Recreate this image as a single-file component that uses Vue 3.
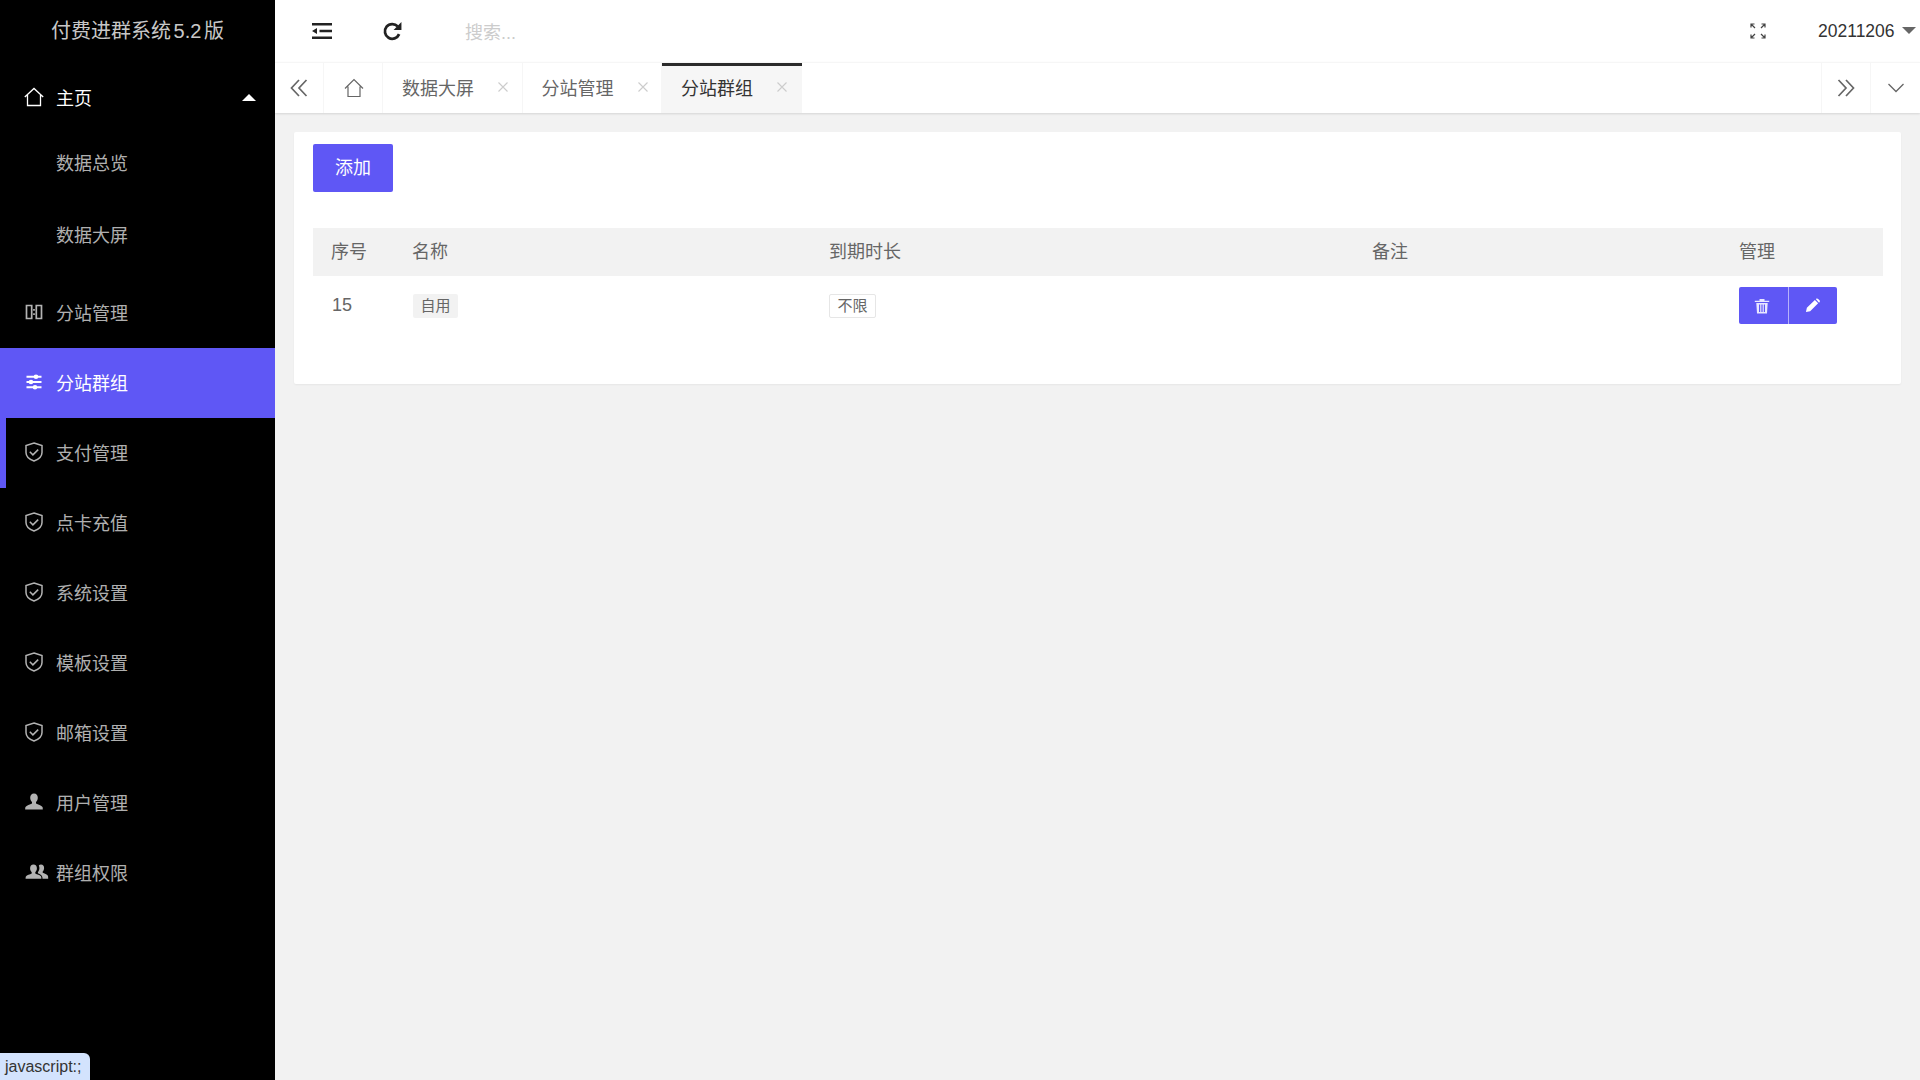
<script setup>
const subItems = ['数据总览', '数据大屏']
const menu = [
  { label: '分站管理', icon: 'book' },
  { label: '分站群组', icon: 'sliders', active: true },
  { label: '支付管理', icon: 'shield', marked: true },
  { label: '点卡充值', icon: 'shield' },
  { label: '系统设置', icon: 'shield' },
  { label: '模板设置', icon: 'shield' },
  { label: '邮箱设置', icon: 'shield' },
  { label: '用户管理', icon: 'user' },
  { label: '群组权限', icon: 'users' }
]
const tabs = [
  { label: '数据大屏' },
  { label: '分站管理' },
  { label: '分站群组', active: true }
]
</script>

<template>
  <div class="app">
    <aside class="sidebar">
      <div class="logo">付费进群系统<span class="ver">5.2</span>版</div>
      <a class="item home">
        <svg class="ico" viewBox="0 0 20 20" fill="none" stroke="currentColor" stroke-width="1.300"><path d="M.8 10 10 1.500l9.200 8.500M3.500 8v10.500h13V8"/></svg>
        <span>主页</span>
        <i class="up"></i>
      </a>
      <div class="sub">
        <a v-for="s in subItems" :key="s" class="subitem">{{ s }}</a>
      </div>
      <a v-for="m in menu" :key="m.label" class="item" :class="{ active: m.active, marked: m.marked }">
        <svg v-if="m.icon === 'book'" class="ico" viewBox="0 0 20 20" fill="none" stroke="currentColor" stroke-width="1.700"><path d="M2.500 3.500h5.200v13H2.500zM12.300 3.500h5.200v13h-5.200zM10 7v1.800M10 11.200V13"/></svg>
        <svg v-else-if="m.icon === 'sliders'" class="ico" viewBox="0 0 20 20" fill="currentColor"><path d="M2.500 3.800h15v1.900h-15zM2.500 9.050h15v1.900h-15zM2.500 14.300h15v1.900h-15z"/><circle cx="12" cy="4.750" r="2.300"/><circle cx="7" cy="10" r="2.300"/><circle cx="11" cy="15.250" r="2.300"/></svg>
        <svg v-else-if="m.icon === 'shield'" class="ico shield" viewBox="0 0 20 20" fill="none" stroke="currentColor" stroke-width="1.500"><path d="M10 1 18 3.600v6.900c0 4-3.600 7-8 8.500-4.400-1.500-8-4.500-8-8.500V3.600z"/><path d="m5.800 9.800 3.100 3.100 5.300-5.300"/></svg>
        <svg v-else-if="m.icon === 'user'" class="ico" viewBox="0 0 20 20" fill="currentColor"><path d="M10 1.500c2.400 0 3.800 1.800 3.800 4.200 0 1.800-.8 3.500-1.800 4.300v1.500c1.800 1 5.600 1.800 6.500 3.500.3.700.3 2 .3 2.500H1.200c0-.5 0-1.800.3-2.500.9-1.700 4.700-2.500 6.500-3.500V10C7 9.200 6.200 7.500 6.200 5.700 6.200 3.300 7.600 1.500 10 1.500z"/></svg>
        <svg v-else class="ico wide" viewBox="0 0 24 20" fill="currentColor"><path d="M8.500 2.500c2.200 0 3.400 1.600 3.400 3.700 0 1.600-.7 3.100-1.600 3.900v1.400c1.600.9 5 1.600 5.800 3.100.3.600.3 1.800.3 2.200H.6c0-.4 0-1.600.3-2.200.8-1.500 4.200-2.200 5.800-3.100v-1.400C5.800 9.300 5.100 7.800 5.100 6.200c0-2.100 1.200-3.700 3.400-3.700z"/><path d="M16 2.500c2 0 3.100 1.500 3.100 3.400 0 1.500-.6 2.900-1.400 3.600v1.300c1.400.8 4.500 1.500 5.200 2.900.3.600.3 3.100.3 3.100h-5.700c0-2.300-.6-3.600-2.200-4.400-.8-.4-1.700-.8-2.400-1.200v-1c.9-1 1.500-2.500 1.500-4.200 0-1-.2-1.800-.6-2.500.5-.6 1.300-1 2.200-1z"/></svg>
        <span>{{ m.label }}</span>
      </a>
    </aside>

    <main class="main">
      <header class="topbar">
        <svg class="hamb" viewBox="0 0 20 16" fill="#222"><path d="M0 0h20v2.400H0zM7.500 6.800H20v2.400H7.500zM0 13.600h20V16H0zM0 8l5-3v6z"/></svg>
        <svg class="refresh" viewBox="0 0 20 20" fill="none"><path d="M16.300 12.500A7 7 0 1 1 15 5.200" stroke="#222" stroke-width="2.600"/><path d="M18.500 1v7.500H11z" fill="#222"/></svg>
        <div class="search">搜索...</div>
        <svg class="full" viewBox="0 0 16 16" fill="none" stroke="#444" stroke-width="1.200"><path d="M1 4.500V1h3.500M1 1l4 4M15 4.500V1h-3.500M15 1l-4 4M1 11.500V15h3.500M1 15l4-4M15 11.500V15h-3.500M15 15l-4-4"/></svg>
        <div class="account">20211206<i class="caret"></i></div>
      </header>

      <nav class="tabbar">
        <div class="tabbtn left">
          <svg viewBox="0 0 18 18" fill="none" stroke="#666" stroke-width="1.700"><path d="M9 1 1.500 9 9 17M16.500 1 9 9l7.500 8"/></svg>
        </div>
        <div class="tabbtn homebtn">
          <svg viewBox="0 0 20 20" fill="none" stroke="#666" stroke-width="1.200"><path d="M1 10.500 10 1.500l9 9M4 8.500V18.500h12V8.500"/></svg>
        </div>
        <div v-for="t in tabs" :key="t.label" class="tab" :class="{ active: t.active }">
          <span>{{ t.label }}</span>
          <svg class="close" viewBox="0 0 10 10" stroke="#ccc" stroke-width="1.100"><path d="m.5.500 9 9M9.500.500l-9 9"/></svg>
        </div>
        <div class="spacer"></div>
        <div class="tabbtn right">
          <svg viewBox="0 0 18 18" fill="none" stroke="#666" stroke-width="1.700"><path d="m1.500 1 7.500 8-7.500 8M9 1l7.500 8L9 17"/></svg>
        </div>
        <div class="tabbtn down">
          <svg viewBox="0 0 18 10" fill="none" stroke="#666" stroke-width="1.300"><path d="m1.500 1 7.500 7.500L16.500 1"/></svg>
        </div>
      </nav>

      <section class="content">
        <div class="card">
          <button class="add">添加</button>
          <table class="table">
            <colgroup>
              <col class="c1" /><col class="c2" /><col class="c3" /><col class="c4" /><col class="c5" />
            </colgroup>
            <thead>
              <tr><th>序号</th><th>名称</th><th>到期时长</th><th>备注</th><th>管理</th></tr>
            </thead>
            <tbody>
              <tr>
                <td>15</td>
                <td><span class="tag grey">自用</span></td>
                <td><span class="tag plain">不限</span></td>
                <td></td>
                <td class="ops">
                  <div class="group">
                    <button class="act trash">
                      <svg viewBox="0 0 16 16" fill="#e8e6ff"><path d="M.8 2.800h14.400v1.300H.8zM5.500 1h5v1.800h-5zM2.300 5h11.400l-.7 10.500H3zM5 6.500v7.500h1.200V6.500zm2.400 0v7.500h1.200V6.500zm2.400 0v7.500H11V6.500z" fill-rule="evenodd"/></svg>
                    </button>
                    <button class="act pen">
                      <svg viewBox="0 0 16 16" fill="#fff"><path d="M1 15l1-4.500L10.500 2l3.500 3.500L5.500 14zM11.500 1l1-.5c.5-.2 1 0 1.500.5l1.500 1.500c.4.500.5 1 .3 1.500l-.8 1z"/></svg>
                    </button>
                  </div>
                </td>
              </tr>
            </tbody>
          </table>
        </div>
      </section>
    </main>

    <div class="status">javascript:;</div>
  </div>
</template>

<style>
html, body { margin: 0; background: #f2f2f2; }
</style>

<style scoped>
.app {
  display: flex;
  height: 1080px;
  overflow: hidden;
  font-family: "Liberation Sans", "Noto Sans CJK SC", sans-serif;
  font-size: 18px;
  color: #666;
  position: relative;
}
.sidebar {
  width: 275px;
  flex: none;
  background: #000;
  color: rgba(255, 255, 255, .7);
}
.logo {
  height: 62px;
  line-height: 62px;
  text-align: center;
  font-size: 20px;
  color: rgba(255, 255, 255, .8);
}
.ver { margin: 0 2.500px; }
.item {
  height: 70px;
  display: flex;
  align-items: center;
  padding-left: 24px;
  padding-bottom: 2px;
  position: relative;
  box-sizing: border-box;
}
.item span { margin-left: 12px; }
.item.home { color: #fff; padding-bottom: 0; }
.item.active { background: #5f57f5; color: #fff; }
.item.marked::before {
  content: "";
  position: absolute;
  left: 0;
  top: 0;
  bottom: 0;
  width: 6px;
  background: #5f57f5;
}
.ico { width: 20px; height: 20px; flex: none; }
.ico.wide { width: 24px; margin-right: -4px; margin-left: 1px; }
.ico.wide + span { margin-left: 11px; }
.up {
  position: absolute;
  right: 19px;
  top: 32px;
  border: 7px solid transparent;
  border-top: 0;
  border-bottom: 7px solid #fff;
}
.sub { margin: -5px 0 7px; }
.subitem {
  display: block;
  height: 72px;
  line-height: 74px;
  padding-left: 56px;
}
.main { flex: 1; min-width: 0; display: flex; flex-direction: column; }
.topbar {
  height: 62px;
  background: #fff;
  display: flex;
  align-items: center;
  flex: none;
}
.hamb { width: 20px; height: 16px; margin-left: 37px; }
.refresh { width: 21px; height: 21px; margin-left: 50px; }
.search { margin-left: 62px; flex: 1; color: #ccc; }
.full { width: 16px; height: 16px; margin-right: 52px; }
.account { font-size: 17.500px; color: #333; width: 102px; position: relative; }
.caret {
  position: absolute;
  right: 4px;
  top: 6px;
  border: 7px solid transparent;
  border-bottom: 0;
  border-top: 7px solid #666;
}
.tabbar {
  height: 51px;
  flex: none;
  background: #fff;
  display: flex;
  box-shadow: 0 1px 2px rgba(0, 0, 0, .12);
  border-top: 1px solid #f6f6f6;
  box-sizing: border-box;
  position: relative;
}
.tabbtn {
  display: flex;
  align-items: center;
  justify-content: center;
  box-sizing: border-box;
}
.tabbtn.left { width: 49px; border-right: 1px solid #f6f6f6; }
.tabbtn.left svg, .tabbtn.right svg { width: 18px; height: 18px; }
.tabbtn.homebtn { width: 59px; border-right: 1px solid #f6f6f6; }
.tabbtn.homebtn svg { width: 20px; height: 20px; margin-left: 2px; }
.tabbtn.right { width: 49px; border-left: 1px solid #f6f6f6; }
.tabbtn.down { width: 50px; border-left: 1px solid #f6f6f6; }
.tabbtn.down svg { width: 18px; height: 10px; }
.tab {
  width: 139.500px;
  box-sizing: border-box;
  padding: 0 0 3px 19px;
  display: flex;
  align-items: center;
  border-right: 1px solid #f6f6f6;
  position: relative;
}
.tab.active {
  width: 140px;
  background: #f6f6f6;
  color: #333;
  border-right: 0;
}
.tab.active::before {
  content: "";
  position: absolute;
  left: 0;
  right: 0;
  top: 0;
  height: 3px;
  background: #2b2b2b;
}
.close { width: 10px; height: 10px; margin-left: 24px; }
.spacer { flex: 1; }
.content { flex: 1; padding: 19px 19px 0; }
.card {
  background: #fff;
  padding: 12px 18px 48px 19px;
  box-shadow: 0 1px 2px rgba(0, 0, 0, .05);
  border-radius: 2px;
}
.add {
  width: 80px;
  height: 48px;
  display: block;
  border: 0;
  border-radius: 2px;
  background: #5f57f5;
  color: #fff;
  font: inherit;
  padding: 0 0 4px;
}
.table {
  margin-top: 36px;
  width: 1570px;
  table-layout: fixed;
  border-collapse: collapse;
}
.c1 { width: 81px; }
.c2 { width: 417px; }
.c3 { width: 543px; }
.c4 { width: 367px; }
.c5 { width: 162px; }
th {
  height: 48px;
  box-sizing: border-box;
  background: #f2f2f2;
  padding: 0 0 4px 18px;
  text-align: left;
  font-weight: 400;
}
td { height: 60px; box-sizing: border-box; padding: 0 0 0 18px; }
td:first-child { padding: 0 0 2px 19px; }
td.ops { padding-bottom: 1px; }
.tag {
  display: inline-block;
  font-size: 15px;
  border-radius: 2px;
  box-sizing: border-box;
  vertical-align: middle;
  text-align: center;
}
.tag.grey { background: #f2f2f2; width: 45px; height: 24px; line-height: 24px; margin-left: 1px; }
.tag.plain { border: 1px solid #e6e6e6; width: 47px; height: 24px; line-height: 22px; }
.group { display: flex; width: 98px; height: 37px; border-radius: 2px; overflow: hidden; }
.act {
  box-sizing: border-box;
  border: 0;
  padding: 0;
  background: #5f57f5;
  display: flex;
  align-items: center;
  justify-content: center;
}
.act svg { width: 15px; height: 15px; }
.act.trash { width: 49px; padding-right: 4px; }
.act.trash svg { width: 16px; height: 16px; }
.act.pen { width: 49px; border-left: 1px solid #b6b2fa; padding-right: 2px; }
.status {
  position: absolute;
  left: 0;
  bottom: 0;
  width: 90px;
  height: 27px;
  box-sizing: border-box;
  padding-left: 5px;
  line-height: 27px;
  font-size: 16px;
  color: #333;
  background: #d3e3fd;
  border-top-right-radius: 6px;
}
</style>
